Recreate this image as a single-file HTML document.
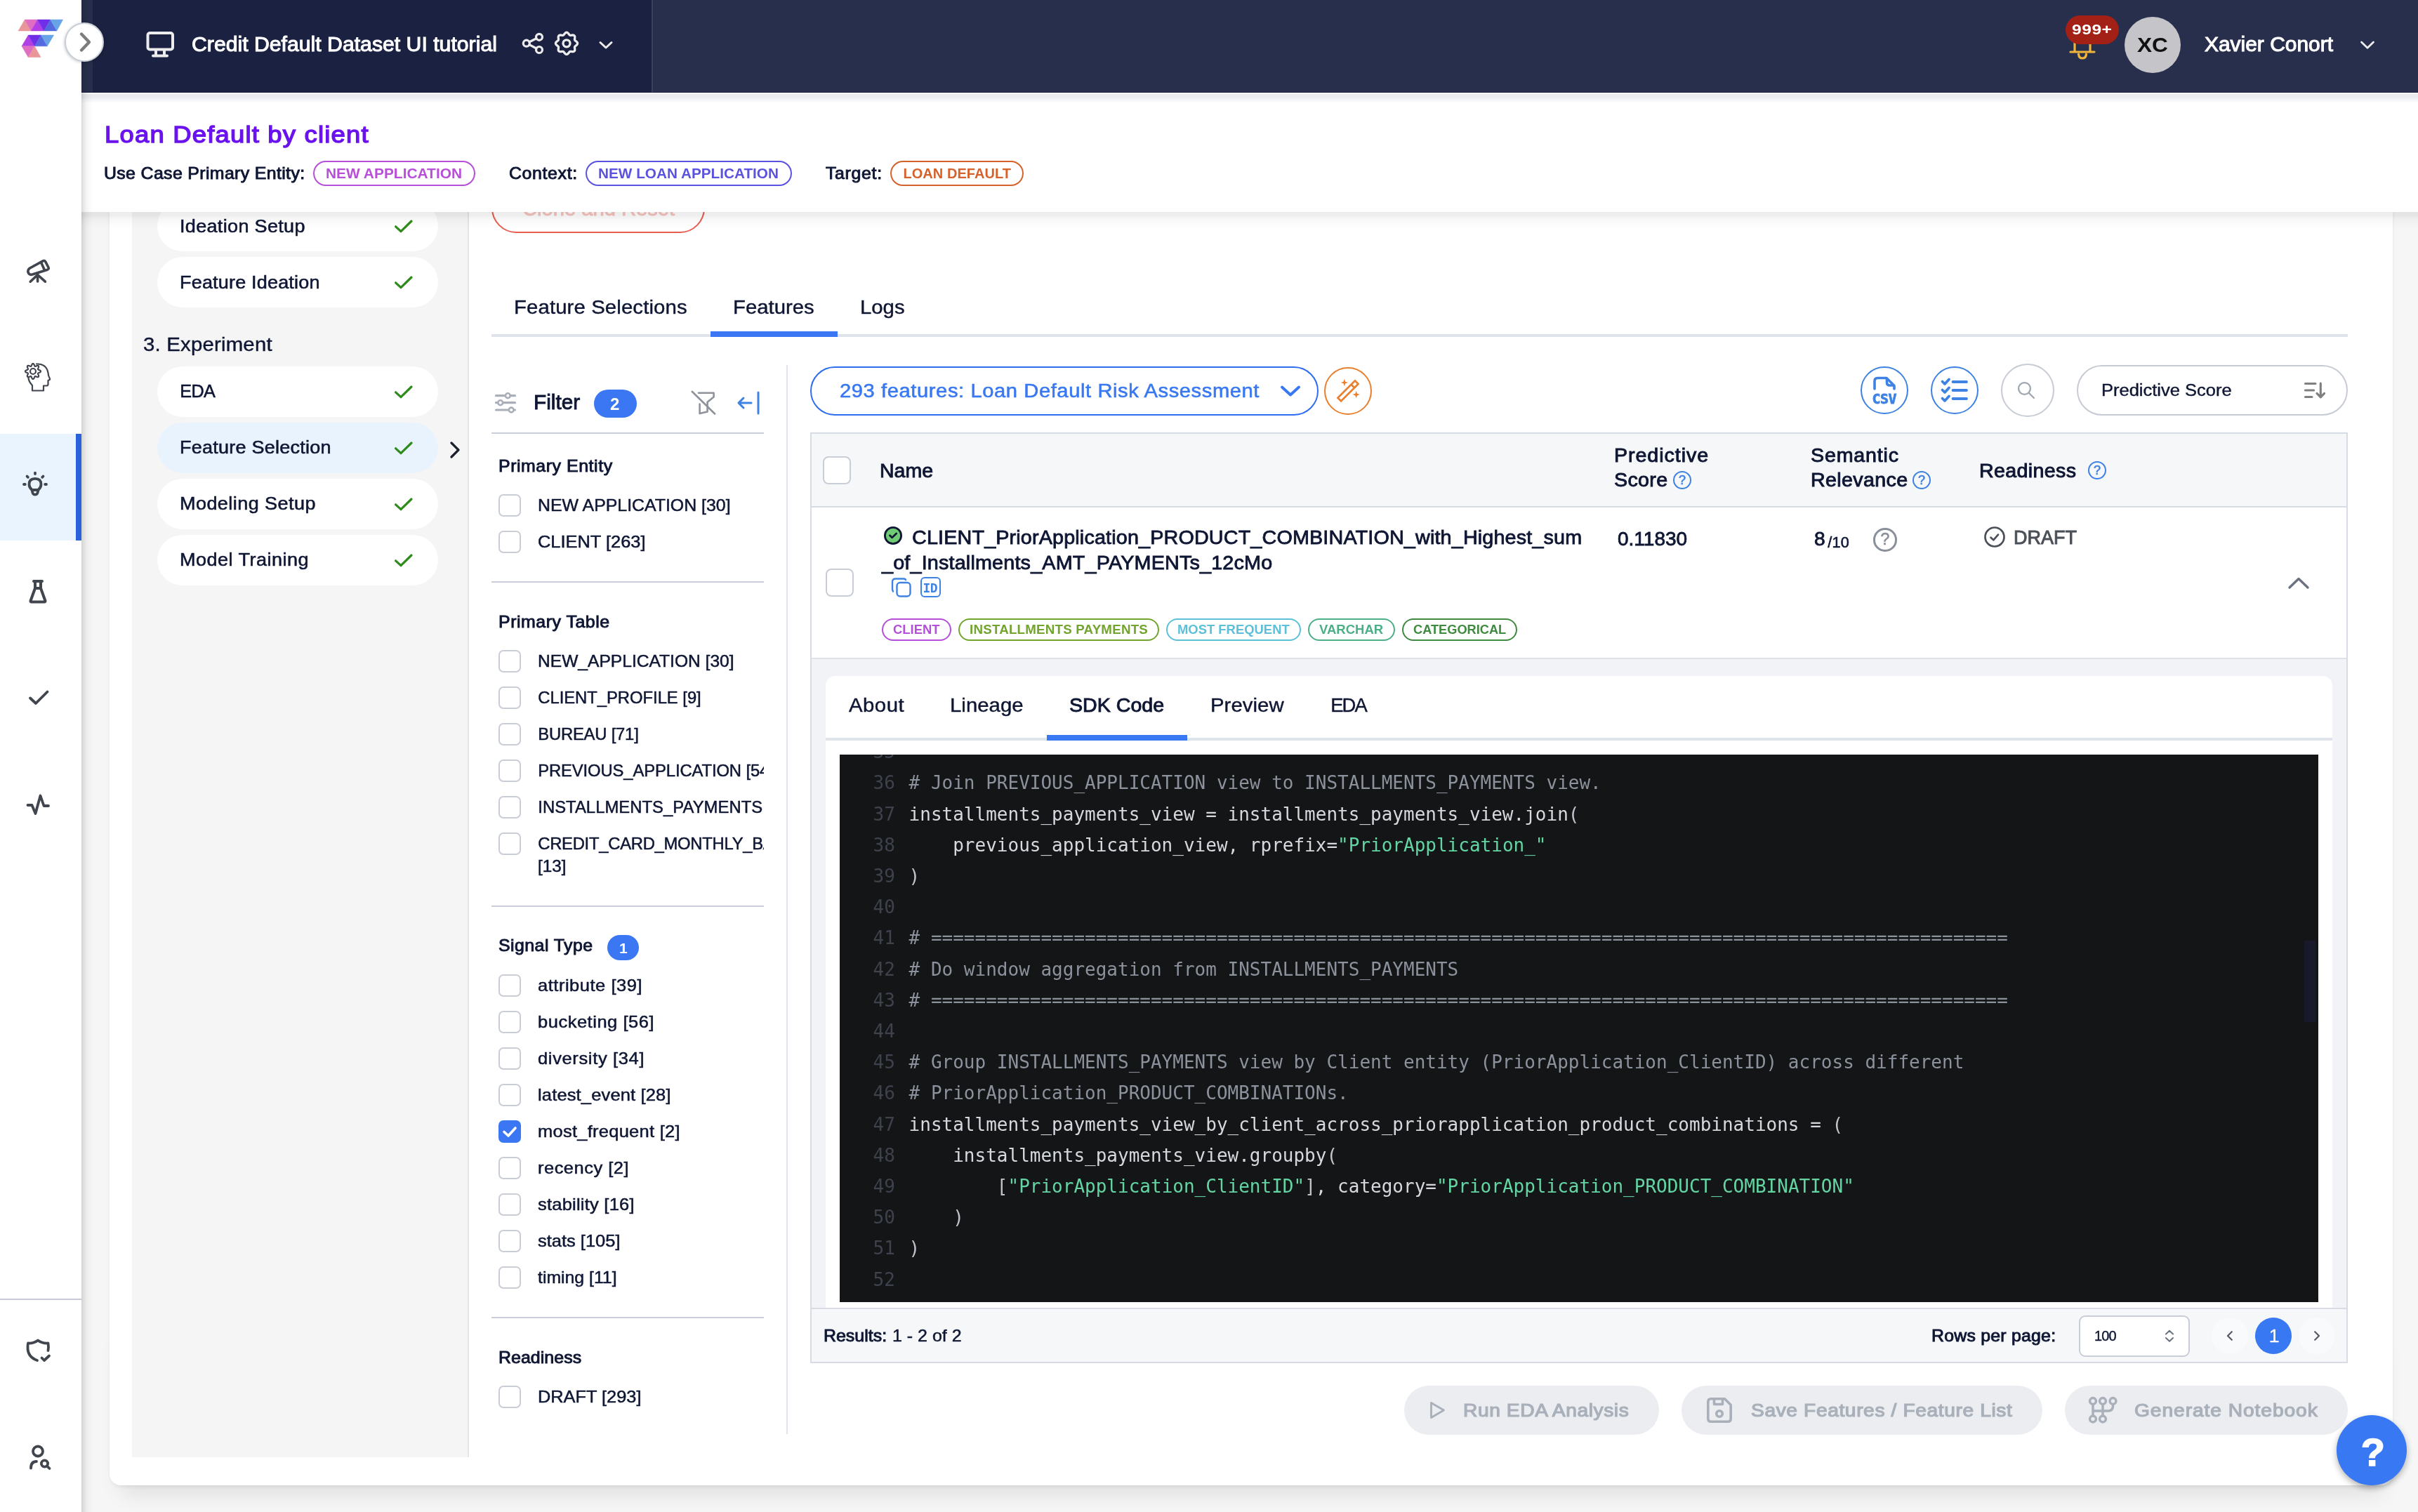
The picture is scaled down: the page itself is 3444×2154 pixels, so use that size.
<!DOCTYPE html>
<html><head><meta charset="utf-8"><title>Feature Selection</title><style>
*{box-sizing:border-box;margin:0;padding:0}
html,body{width:3444px;height:2154px;overflow:hidden;background:#f6f6f6}
body{font-family:"Liberation Sans",sans-serif;position:relative}
.a{position:absolute}
.t{position:absolute;white-space:nowrap;line-height:1}
.code{font-family:"DejaVu Sans Mono","Liberation Mono",monospace;font-size:26px;white-space:pre;position:absolute;line-height:1}
</style></head><body><div id="root" style="position:absolute;left:0;top:0;width:3444px;height:2154px;overflow:hidden;will-change:transform">
<div class="a" style="left:170px;top:1900px;width:3224px;height:216px;border-radius:0 0 16px 16px;box-shadow:0 14px 30px rgba(0,0,0,.09)"></div>
<div class="a" style="left:156px;top:250px;width:3252px;height:1866px;background:#fff;border-radius:0 0 16px 16px;box-shadow:0 3px 6px -1px rgba(0,0,0,.07),0 0 4px rgba(0,0,0,.04)"></div>
<div class="a" style="left:188px;top:280px;width:480px;height:1796px;background:#f5f5f5;border-right:2px solid #e3e5ea"></div>
<div class="a" style="left:224px;top:286px;width:400px;height:72px;background:#fff;border-radius:36px"></div><span class="t" style="font-size: 25.24px; color: rgb(14, 22, 51); -webkit-text-stroke: 0.55px rgb(14, 22, 51); top: 309.73px; left: 256.27px; letter-spacing: 0.308px; transform: scaleX(1.07); transform-origin: 0px 0px;">Ideation Setup</span><svg class="a" style="left:560px;top:308px;" width="30" height="28" viewBox="0 0 30 28" fill="none"><path d="M3.6 14.8 L11 21.7 L26 7" stroke="#2f8a1c" stroke-width="3.2" stroke-linecap="round" stroke-linejoin="round"></path></svg>
<div class="a" style="left:224px;top:366px;width:400px;height:72px;background:#fff;border-radius:36px"></div><span class="t" style="font-size: 25.24px; color: rgb(14, 22, 51); -webkit-text-stroke: 0.55px rgb(14, 22, 51); top: 389.73px; left: 256.27px; letter-spacing: 0.175px; transform: scaleX(1.07); transform-origin: 0px 0px;">Feature Ideation</span><svg class="a" style="left:560px;top:388px;" width="30" height="28" viewBox="0 0 30 28" fill="none"><path d="M3.6 14.8 L11 21.7 L26 7" stroke="#2f8a1c" stroke-width="3.2" stroke-linecap="round" stroke-linejoin="round"></path></svg>
<span class="t" style="font-size: 27.44px; color: rgb(14, 22, 51); -webkit-text-stroke: 0.4px rgb(14, 22, 51); top: 476.8px; left: 204.2px; letter-spacing: 0.192px; transform: scaleX(1.07); transform-origin: 0px 0px;">3. Experiment</span>
<div class="a" style="left:224px;top:521.5px;width:400px;height:72px;background:#fff;border-radius:36px"></div><span class="t" style="font-size: 25.24px; color: rgb(14, 22, 51); -webkit-text-stroke: 0.55px rgb(14, 22, 51); top: 545.23px; left: 256.27px; letter-spacing: -0.72px;">EDA</span><svg class="a" style="left:560px;top:543.5px;" width="30" height="28" viewBox="0 0 30 28" fill="none"><path d="M3.6 14.8 L11 21.7 L26 7" stroke="#2f8a1c" stroke-width="3.2" stroke-linecap="round" stroke-linejoin="round"></path></svg>
<div class="a" style="left:224px;top:601.5px;width:400px;height:72px;background:#e9f3fd;border-radius:36px"></div><span class="t" style="font-size: 25.24px; color: rgb(14, 22, 51); -webkit-text-stroke: 0.55px rgb(14, 22, 51); top: 625.23px; left: 256.27px; letter-spacing: 0.222px; transform: scaleX(1.07); transform-origin: 0px 0px;">Feature Selection</span><svg class="a" style="left:560px;top:623.5px;" width="30" height="28" viewBox="0 0 30 28" fill="none"><path d="M3.6 14.8 L11 21.7 L26 7" stroke="#2f8a1c" stroke-width="3.2" stroke-linecap="round" stroke-linejoin="round"></path></svg>
<div class="a" style="left:224px;top:681.5px;width:400px;height:72px;background:#fff;border-radius:36px"></div><span class="t" style="font-size: 25.24px; color: rgb(14, 22, 51); -webkit-text-stroke: 0.55px rgb(14, 22, 51); top: 705.23px; left: 256.27px; letter-spacing: 0.418px; transform: scaleX(1.07); transform-origin: 0px 0px;">Modeling Setup</span><svg class="a" style="left:560px;top:703.5px;" width="30" height="28" viewBox="0 0 30 28" fill="none"><path d="M3.6 14.8 L11 21.7 L26 7" stroke="#2f8a1c" stroke-width="3.2" stroke-linecap="round" stroke-linejoin="round"></path></svg>
<div class="a" style="left:224px;top:761.5px;width:400px;height:72px;background:#fff;border-radius:36px"></div><span class="t" style="font-size: 25.24px; color: rgb(14, 22, 51); -webkit-text-stroke: 0.55px rgb(14, 22, 51); top: 785.23px; left: 256.27px; letter-spacing: 0.456px; transform: scaleX(1.07); transform-origin: 0px 0px;">Model Training</span><svg class="a" style="left:560px;top:783.5px;" width="30" height="28" viewBox="0 0 30 28" fill="none"><path d="M3.6 14.8 L11 21.7 L26 7" stroke="#2f8a1c" stroke-width="3.2" stroke-linecap="round" stroke-linejoin="round"></path></svg>
<svg class="a" style="left:638px;top:628px;" width="20" height="26" viewBox="0 0 20 26" fill="none"><path d="M5 3 L15 13 L5 23" stroke="#1a1f2e" stroke-width="3.2" stroke-linecap="round" stroke-linejoin="round"></path></svg>
<span class="t" style="font-size: 27.44px; color: rgb(14, 22, 51); -webkit-text-stroke: 0.4px rgb(14, 22, 51); top: 423.8px; left: 732.2px; letter-spacing: 0.099px; transform: scaleX(1.07); transform-origin: 0px 0px;">Feature Selections</span>
<span class="t" style="font-size: 27.44px; color: rgb(14, 22, 51); -webkit-text-stroke: 0.4px rgb(14, 22, 51); top: 423.8px; left: 1044.2px; letter-spacing: 0px; transform: scaleX(1.068); transform-origin: 0px 0px;">Features</span>
<span class="t" style="font-size: 27.44px; color: rgb(14, 22, 51); -webkit-text-stroke: 0.4px rgb(14, 22, 51); top: 423.8px; left: 1225.2px; letter-spacing: 0px; transform: scaleX(1.069); transform-origin: 0px 0px;">Logs</span>
<div class="a" style="left:700px;top:476px;width:2644px;height:4px;background:#dfe3ea"></div>
<div class="a" style="left:1012px;top:472px;width:181px;height:8px;background:#3b77f3"></div>
<div class="a" style="left:700px;top:261px;width:303.5px;height:70.5px;border:2px solid #e85d50;border-radius:36px;background:#fff"></div>
<span class="t" style="font-size: 28.75px; color: rgb(246, 196, 191); -webkit-text-stroke: 0.9px rgb(246, 196, 191); top: 283.05px; left: 744.45px; letter-spacing: 0px; transform: scaleX(1.014); transform-origin: 0px 0px;">Clone and Reset</span>
<svg class="a" style="left:700px;top:555px;" width="40" height="40" viewBox="0 0 40 40" fill="none"><g stroke="#a9aeb8" stroke-width="3.2" stroke-linecap="round" fill="none">
<path d="M6.5 8.7H18.5M28 8.7H33.5M6.5 18.7H8M17.5 18.7H33.5M6.5 29H23.5M33 29H33.5"></path>
<circle cx="23.3" cy="8.7" r="3.4" stroke-width="2.6"></circle><circle cx="12.7" cy="18.7" r="3.4" stroke-width="2.6"></circle><circle cx="28.2" cy="29" r="3.4" stroke-width="2.6"></circle></g></svg>
<span class="t" style="font-size: 28.75px; color: rgb(14, 22, 51); -webkit-text-stroke: 0.9px rgb(14, 22, 51); top: 558.55px; left: 760.45px; letter-spacing: 0px; transform: scaleX(1.035); transform-origin: 0px 0px;">Filter</span>
<div class="a" style="left:846px;top:555px;width:61px;height:40px;background:#3b77f3;border-radius:20px"></div>
<span class="t" style="font-size: 24px; color: rgb(255, 255, 255); font-weight: 700; top: 564px; left: 869px;">2</span>
<svg class="a" style="left:980px;top:550px;" width="44" height="44" viewBox="0 0 44 44" fill="none"><g stroke="#8e939b" stroke-width="2.6" stroke-linecap="round" stroke-linejoin="round" fill="none">
<path d="M15 9.8H36.6V15.5L27.6 22.8V36.4L16.6 39.1V25.5"></path><path d="M5.7 7.8L38.1 39.5"></path></g></svg>
<svg class="a" style="left:1048px;top:556px;" width="36" height="36" viewBox="0 0 36 36" fill="none"><g stroke="#3e82e3" stroke-width="3" stroke-linecap="round" stroke-linejoin="round" fill="none">
<path d="M22 18H4M11 11L4 18L11 25"></path><path d="M32 3V33"></path></g></svg>
<div class="a" style="left:700px;top:616px;width:388px;height:2px;background:#c9ced8"></div>
<div class="a" style="left:1120px;top:520px;width:2px;height:1523px;background:#e0e3ea"></div>
<span class="t" style="font-size: 23.25px; color: rgb(14, 22, 51); -webkit-text-stroke: 0.9px rgb(14, 22, 51); top: 652.55px; left: 710.45px; letter-spacing: 0.522px; transform: scaleX(1.07); transform-origin: 0px 0px;">Primary Entity</span>
<div class="a" style="left:710px;top:704px;width:32px;height:32px;background:#fff;border:2px solid #c9ced6;border-radius:7px"></div><span class="t" style="font-size: 23.81px; color: rgb(14, 22, 51); -webkit-text-stroke: 0.5px rgb(14, 22, 51); top: 707.75px; left: 766.25px; letter-spacing: 0px; transform: scaleX(1.045); transform-origin: 0px 0px;">NEW APPLICATION [30]</span>
<div class="a" style="left:710px;top:756px;width:32px;height:32px;background:#fff;border:2px solid #c9ced6;border-radius:7px"></div><span class="t" style="font-size: 23.81px; color: rgb(14, 22, 51); -webkit-text-stroke: 0.5px rgb(14, 22, 51); top: 759.75px; left: 766.25px; letter-spacing: 0px; transform: scaleX(1.068); transform-origin: 0px 0px;">CLIENT [263]</span>
<div class="a" style="left:700px;top:828px;width:388px;height:2px;background:#c9ced8"></div>
<span class="t" style="font-size: 23.25px; color: rgb(14, 22, 51); -webkit-text-stroke: 0.9px rgb(14, 22, 51); top: 874.55px; left: 710.45px; letter-spacing: 0.504px; transform: scaleX(1.07); transform-origin: 0px 0px;">Primary Table</span>
<div class="a" style="left:700px;top:900px;width:388px;height:370px;overflow:hidden">
</div>
<div class="a" style="left:710px;top:926px;width:32px;height:32px;background:#fff;border:2px solid #c9ced6;border-radius:7px"></div><span class="t" style="font-size: 23.81px; color: rgb(14, 22, 51); -webkit-text-stroke: 0.5px rgb(14, 22, 51); top: 929.75px; left: 766.25px; letter-spacing: 0px; transform: scaleX(1.033); transform-origin: 0px 0px;">NEW_APPLICATION [30]</span>
<div class="a" style="left:710px;top:978px;width:32px;height:32px;background:#fff;border:2px solid #c9ced6;border-radius:7px"></div><span class="t" style="font-size: 23.81px; color: rgb(14, 22, 51); -webkit-text-stroke: 0.5px rgb(14, 22, 51); top: 981.75px; left: 766.25px; letter-spacing: -0.016px;">CLIENT_PROFILE [9]</span>
<div class="a" style="left:710px;top:1030px;width:32px;height:32px;background:#fff;border:2px solid #c9ced6;border-radius:7px"></div><span class="t" style="font-size: 23.81px; color: rgb(14, 22, 51); -webkit-text-stroke: 0.5px rgb(14, 22, 51); top: 1033.75px; left: 766.25px; letter-spacing: -0.198px;">BUREAU [71]</span>
<div class="a" style="left:710px;top:1082px;width:32px;height:32px;background:#fff;border:2px solid #c9ced6;border-radius:7px"></div><div class="a" style="left:710px;top:1134px;width:32px;height:32px;background:#fff;border:2px solid #c9ced6;border-radius:7px"></div><div class="a" style="left:710px;top:1186px;width:32px;height:32px;background:#fff;border:2px solid #c9ced6;border-radius:7px"></div>
<div class="a" style="left:760px;top:1070px;width:328px;height:200px;overflow:hidden">
<span class="t" style="font-size: 23.81px; color: rgb(14, 22, 51); -webkit-text-stroke: 0.5px rgb(14, 22, 51); top: 15.75px; left: 6.25px; letter-spacing: -0.109px;">PREVIOUS_APPLICATION [54]</span>
<span class="t" style="font-size: 23.81px; color: rgb(14, 22, 51); -webkit-text-stroke: 0.5px rgb(14, 22, 51); top: 67.75px; left: 6.25px; letter-spacing: 0.061px;">INSTALLMENTS_PAYMENTS [40]</span>
<span class="t" style="font-size: 23.81px; color: rgb(14, 22, 51); -webkit-text-stroke: 0.5px rgb(14, 22, 51); top: 119.75px; left: 6.25px; letter-spacing: -0.265px;">CREDIT_CARD_MONTHLY_BALANCE</span>
<span class="t" style="font-size: 23.81px; color: rgb(14, 22, 51); -webkit-text-stroke: 0.5px rgb(14, 22, 51); top: 151.75px; left: 6.25px; letter-spacing: 0px; transform: scaleX(1.02); transform-origin: 0px 0px;">[13]</span>
</div>
<div class="a" style="left:700px;top:1290px;width:388px;height:2px;background:#c9ced8"></div>
<span class="t" style="font-size: 23.25px; color: rgb(14, 22, 51); -webkit-text-stroke: 0.9px rgb(14, 22, 51); top: 1335.55px; left: 710.45px; letter-spacing: 0.425px; transform: scaleX(1.07); transform-origin: 0px 0px;">Signal Type</span>
<div class="a" style="left:865px;top:1332px;width:45px;height:36px;background:#3b77f3;border-radius:18px"></div>
<span class="t" style="font-size: 21px; color: rgb(255, 255, 255); font-weight: 700; top: 1340px; left: 882px;">1</span>
<div class="a" style="left:710px;top:1388px;width:32px;height:32px;background:#fff;border:2px solid #c9ced6;border-radius:7px"></div><span class="t" style="font-size: 23.81px; color: rgb(14, 22, 51); -webkit-text-stroke: 0.5px rgb(14, 22, 51); top: 1391.75px; left: 766.25px; letter-spacing: 0.499px; transform: scaleX(1.07); transform-origin: 0px 0px;">attribute [39]</span>
<div class="a" style="left:710px;top:1440px;width:32px;height:32px;background:#fff;border:2px solid #c9ced6;border-radius:7px"></div><span class="t" style="font-size: 23.81px; color: rgb(14, 22, 51); -webkit-text-stroke: 0.5px rgb(14, 22, 51); top: 1443.75px; left: 766.25px; letter-spacing: 0.499px; transform: scaleX(1.07); transform-origin: 0px 0px;">bucketing [56]</span>
<div class="a" style="left:710px;top:1492px;width:32px;height:32px;background:#fff;border:2px solid #c9ced6;border-radius:7px"></div><span class="t" style="font-size: 23.81px; color: rgb(14, 22, 51); -webkit-text-stroke: 0.5px rgb(14, 22, 51); top: 1495.75px; left: 766.25px; letter-spacing: 0.615px; transform: scaleX(1.07); transform-origin: 0px 0px;">diversity [34]</span>
<div class="a" style="left:710px;top:1544px;width:32px;height:32px;background:#fff;border:2px solid #c9ced6;border-radius:7px"></div><span class="t" style="font-size: 23.81px; color: rgb(14, 22, 51); -webkit-text-stroke: 0.5px rgb(14, 22, 51); top: 1547.75px; left: 766.25px; letter-spacing: 0.154px; transform: scaleX(1.07); transform-origin: 0px 0px;">latest_event [28]</span>
<div class="a" style="left:710px;top:1596px;width:32px;height:32px;background:#3b77f3;border-radius:7px"></div><svg class="a" style="left:710px;top:1596px;" width="32" height="32" viewBox="0 0 32 32" fill="none"><path d="M8 16.5L14 22L24 11" stroke="#fff" stroke-width="3.6" stroke-linecap="round" stroke-linejoin="round"></path></svg><span class="t" style="font-size: 23.81px; color: rgb(14, 22, 51); -webkit-text-stroke: 0.5px rgb(14, 22, 51); top: 1599.75px; left: 766.25px; letter-spacing: 0.253px; transform: scaleX(1.07); transform-origin: 0px 0px;">most_frequent [2]</span>
<div class="a" style="left:710px;top:1648px;width:32px;height:32px;background:#fff;border:2px solid #c9ced6;border-radius:7px"></div><span class="t" style="font-size: 23.81px; color: rgb(14, 22, 51); -webkit-text-stroke: 0.5px rgb(14, 22, 51); top: 1651.75px; left: 766.25px; letter-spacing: 0.462px; transform: scaleX(1.07); transform-origin: 0px 0px;">recency [2]</span>
<div class="a" style="left:710px;top:1700px;width:32px;height:32px;background:#fff;border:2px solid #c9ced6;border-radius:7px"></div><span class="t" style="font-size: 23.81px; color: rgb(14, 22, 51); -webkit-text-stroke: 0.5px rgb(14, 22, 51); top: 1703.75px; left: 766.25px; letter-spacing: 0.219px; transform: scaleX(1.07); transform-origin: 0px 0px;">stability [16]</span>
<div class="a" style="left:710px;top:1752px;width:32px;height:32px;background:#fff;border:2px solid #c9ced6;border-radius:7px"></div><span class="t" style="font-size: 23.81px; color: rgb(14, 22, 51); -webkit-text-stroke: 0.5px rgb(14, 22, 51); top: 1755.75px; left: 766.25px; letter-spacing: 0.002px; transform: scaleX(1.07); transform-origin: 0px 0px;">stats [105]</span>
<div class="a" style="left:710px;top:1804px;width:32px;height:32px;background:#fff;border:2px solid #c9ced6;border-radius:7px"></div><span class="t" style="font-size: 23.81px; color: rgb(14, 22, 51); -webkit-text-stroke: 0.5px rgb(14, 22, 51); top: 1807.75px; left: 766.25px; letter-spacing: 0px; transform: scaleX(1.042); transform-origin: 0px 0px;">timing [11]</span>
<div class="a" style="left:700px;top:1876px;width:388px;height:2px;background:#c9ced8"></div>
<span class="t" style="font-size: 23.25px; color: rgb(14, 22, 51); -webkit-text-stroke: 0.9px rgb(14, 22, 51); top: 1922.55px; left: 710.45px; letter-spacing: 0.064px; transform: scaleX(1.07); transform-origin: 0px 0px;">Readiness</span>
<div class="a" style="left:710px;top:1974px;width:32px;height:32px;background:#fff;border:2px solid #c9ced6;border-radius:7px"></div><span class="t" style="font-size: 23.81px; color: rgb(14, 22, 51); -webkit-text-stroke: 0.5px rgb(14, 22, 51); top: 1977.75px; left: 766.25px; letter-spacing: 0px; transform: scaleX(1.065); transform-origin: 0px 0px;">DRAFT [293]</span>
<div class="a" style="left:1154px;top:522px;width:724px;height:70px;border:2px solid #2f6df0;border-radius:35px;background:#fff"></div>
<span class="t" style="font-size: 27.24px; color: rgb(56, 120, 242); -webkit-text-stroke: 0.55px rgb(56, 120, 242); top: 542.73px; left: 1196.28px; letter-spacing: 0.548px; transform: scaleX(1.07); transform-origin: 0px 0px;">293 features: Loan Default Risk Assessment</span>
<svg class="a" style="left:1818px;top:543px;" width="40" height="28" viewBox="0 0 40 28" fill="none"><path d="M8 8.6 L20 19.4 L32 8.6" stroke="#3878f2" stroke-width="4" stroke-linecap="round" stroke-linejoin="round"></path></svg>
<div class="a" style="left:1886px;top:523px;width:68px;height:68px;border:2px solid #e8802f;border-radius:50%;background:#fff"></div>
<svg class="a" style="left:1896px;top:533px;" width="48" height="48" viewBox="0 0 48 48" fill="none"><g stroke="#e8802f" stroke-width="2.7" stroke-linejoin="miter" fill="none" transform="rotate(-45 24 23.9)">
<rect x="6.7" y="20.65" width="34.6" height="6.5"></rect><path d="M33.6 20.65 V27.15"></path></g>
<path d="M18.90 6.80 L20.24 10.66 L24.10 12.00 L20.24 13.34 L18.90 17.20 L17.56 13.34 L13.70 12.00 L17.56 10.66Z" fill="#e8802f"></path>
<path d="M35.70 23.90 L37.04 27.76 L40.90 29.10 L37.04 30.44 L35.70 34.30 L34.36 30.44 L30.50 29.10 L34.36 27.76Z" fill="#e8802f"></path></svg>
<div class="a" style="left:2650px;top:522px;width:68px;height:68px;border:2px solid #3e82e3;border-radius:50%;background:#fff"></div>
<svg class="a" style="left:2660px;top:532px;" width="48" height="48" viewBox="0 0 48 48" fill="none"><g stroke="#3e82e3" stroke-width="3.6" stroke-linecap="round" stroke-linejoin="round" fill="none">
<path d="M10 22 V11 Q10 6.5 14.5 6.5 H27 L38 17.5 V22"></path><path d="M27.5 7.5 V13 Q27.5 17 31.5 17 H37"></path></g></svg>
<span class="t" style="font-size: 19.89px; color: rgb(62, 130, 227); font-weight: 700; -webkit-text-stroke: 0.8px rgb(62, 130, 227); font-family: &quot;DejaVu Sans Mono&quot;, &quot;Liberation Mono&quot;, monospace; top: 559.4px; left: 2666.4px; letter-spacing: -0.353px;">CSV</span>
<div class="a" style="left:2750px;top:522px;width:68px;height:68px;border:2px solid #3e82e3;border-radius:50%;background:#fff"></div>
<svg class="a" style="left:2760px;top:532px;" width="48" height="48" viewBox="0 0 48 48" fill="none"><g stroke="#3e82e3" stroke-width="3.8" stroke-linecap="round" stroke-linejoin="round" fill="none">
<path d="M21.5 12 H41 M21.5 24 H41 M21.5 36 H41"></path>
<path d="M6.5 11.5 L10 15 L16 8.5 M6.5 23.5 L10 27 L16 20.5 M6.5 35.5 L10 39 L16 32.5"></path></g></svg>
<div class="a" style="left:2850px;top:518px;width:76px;height:76px;border:2px solid #c6cbd4;border-radius:50%;background:#fff"></div>
<svg class="a" style="left:2866px;top:534px;" width="44" height="44" viewBox="0 0 44 44" fill="none"><g stroke="#a0a6b0" stroke-width="2.3" stroke-linecap="round" fill="none"><circle cx="17.5" cy="19.5" r="8.4"></circle><path d="M24 26 L31 33"></path></g></svg>
<div class="a" style="left:2958px;top:520px;width:386px;height:72px;border:2px solid #c6cbd4;border-radius:36px;background:#fff"></div>
<span class="t" style="font-size: 23.94px; color: rgb(14, 22, 51); -webkit-text-stroke: 0.4px rgb(14, 22, 51); top: 543.8px; left: 2992.7px; letter-spacing: 0px; transform: scaleX(1.065); transform-origin: 0px 0px;">Predictive Score</span>
<svg class="a" style="left:3280px;top:538px;" width="34" height="34" viewBox="0 0 34 34" fill="none"><g stroke="#7f7f82" stroke-width="3.1" stroke-linecap="round" stroke-linejoin="round" fill="none"><path d="M3.5 8.5 H18 M3.5 18 H15.6 M3.5 27.5 H13"></path><path d="M25.3 8 V27.5 M20 22.3 L25.3 27.8 L30.6 22.3"></path></g></svg>
<div class="a" style="left:1154px;top:616px;width:2190px;height:1326px;border:2px solid #d7dbe3;background:#f2f3f6"></div>
<div class="a" style="left:1156px;top:618px;width:2186px;height:104px;background:#f6f7f9"></div>
<div class="a" style="left:1156px;top:721px;width:2186px;height:2px;background:#d7dbe3"></div>
<div class="a" style="left:1172px;top:650px;width:40px;height:40px;background:#fff;border:2px solid #c9ced6;border-radius:8px"></div>
<span class="t" style="font-size: 27.75px; color: rgb(14, 22, 51); -webkit-text-stroke: 0.9px rgb(14, 22, 51); top: 656.55px; left: 1252.95px; letter-spacing: 0px; transform: scaleX(1.028); transform-origin: 0px 0px;">Name</span>
<span class="t" style="font-size: 26.75px; color: rgb(14, 22, 51); -webkit-text-stroke: 0.9px rgb(14, 22, 51); top: 635.55px; left: 2299.45px; letter-spacing: 0.875px; transform: scaleX(1.07); transform-origin: 0px 0px;">Predictive</span>
<span class="t" style="font-size: 26.75px; color: rgb(14, 22, 51); -webkit-text-stroke: 0.9px rgb(14, 22, 51); top: 670.55px; left: 2299.45px; letter-spacing: 0.308px; transform: scaleX(1.07); transform-origin: 0px 0px;">Score</span>
<span class="t" style="font-size: 26.75px; color: rgb(14, 22, 51); -webkit-text-stroke: 0.9px rgb(14, 22, 51); top: 635.55px; left: 2579.45px; letter-spacing: 0.771px; transform: scaleX(1.07); transform-origin: 0px 0px;">Semantic</span>
<span class="t" style="font-size: 26.75px; color: rgb(14, 22, 51); -webkit-text-stroke: 0.9px rgb(14, 22, 51); top: 670.55px; left: 2579.45px; letter-spacing: 0.332px; transform: scaleX(1.07); transform-origin: 0px 0px;">Relevance</span>
<span class="t" style="font-size: 26.75px; color: rgb(14, 22, 51); -webkit-text-stroke: 0.9px rgb(14, 22, 51); top: 657.55px; left: 2819.45px; letter-spacing: 0.332px; transform: scaleX(1.07); transform-origin: 0px 0px;">Readiness</span>
<div class="a" style="left:2383.0px;top:671.0px;width:26px;height:26px;border:2px solid #3e82e3;border-radius:50%"></div><span class="t" style="left:2383.0px;top:671.0px;width:26px;height:26px;line-height:26px;text-align:center;font-size:18px;color:#3e82e3;-webkit-text-stroke:0.6px #3e82e3">?</span>
<div class="a" style="left:2724.0px;top:671.0px;width:26px;height:26px;border:2px solid #3e82e3;border-radius:50%"></div><span class="t" style="left:2724.0px;top:671.0px;width:26px;height:26px;line-height:26px;text-align:center;font-size:18px;color:#3e82e3;-webkit-text-stroke:0.6px #3e82e3">?</span>
<div class="a" style="left:2974.0px;top:657.0px;width:26px;height:26px;border:2px solid #3e82e3;border-radius:50%"></div><span class="t" style="left:2974.0px;top:657.0px;width:26px;height:26px;line-height:26px;text-align:center;font-size:18px;color:#3e82e3;-webkit-text-stroke:0.6px #3e82e3">?</span>
<div class="a" style="left:1156px;top:723px;width:2186px;height:215px;background:#fff"></div>
<div class="a" style="left:1156px;top:937px;width:2186px;height:2px;background:#dfe2e8"></div>
<div class="a" style="left:1176px;top:810px;width:40px;height:40px;background:#fff;border:2px solid #c9ced6;border-radius:8px"></div>
<svg class="a" style="left:1258px;top:749px;" width="28" height="28" viewBox="0 0 28 28" fill="none"><circle cx="14" cy="14" r="11.6" fill="#6fcb74" stroke="#0e1633" stroke-width="2.8"></circle><path d="M9.4 13.8 L12.7 16.9 L18.7 11" stroke="#0e1633" stroke-width="2.7" stroke-linecap="round" stroke-linejoin="round"></path></svg>
<span class="t" style="font-size: 26.89px; color: rgb(14, 22, 51); -webkit-text-stroke: 0.8px rgb(14, 22, 51); top: 752.6px; left: 1299.4px; letter-spacing: 0.137px; transform: scaleX(1.07); transform-origin: 0px 0px;">CLIENT_PriorApplication_PRODUCT_COMBINATION_with_Highest_sum</span>
<span class="t" style="font-size: 26.89px; color: rgb(14, 22, 51); -webkit-text-stroke: 0.8px rgb(14, 22, 51); top: 788.6px; left: 1256.4px; letter-spacing: 0.162px; transform: scaleX(1.07); transform-origin: 0px 0px;">_of_Installments_AMT_PAYMENTs_12cMo</span>
<svg class="a" style="left:1268px;top:821px;" width="32" height="32" viewBox="0 0 32 32" fill="none"><g stroke="#3e82e3" stroke-width="2.4" stroke-linecap="round" stroke-linejoin="round" fill="none"><rect x="9.5" y="9" width="19" height="19.5" rx="4.5"></rect><path d="M4 21.5 Q3 20 3 18 V8 Q3 3.5 7.5 3.5 H19 Q21.5 3.5 22 5"></path></g></svg>
<div class="a" style="left:1311px;top:822px;width:29px;height:29px;border:2.6px solid #3e82e3;border-radius:6px"></div>
<span class="t" style="font-size: 18px; color: rgb(62, 130, 227); font-weight: 700; font-family: &quot;DejaVu Sans Mono&quot;, &quot;Liberation Mono&quot;, monospace; top: 828.5px; left: 1314.5px; letter-spacing: -0.687px;">ID</span>
<div class="a" style="left:1256px;top:881px;width:99px;height:32px;border:2px solid #b54fd9;border-radius:16px;background:#fff"></div><span class="t" style="font-size: 17.5px; color: rgb(181, 79, 217); font-weight: 700; top: 889px; left: 1272px; letter-spacing: 0px; transform: scaleX(1.054); transform-origin: 0px 0px;">CLIENT</span>
<div class="a" style="left:1365px;top:881px;width:285.5px;height:32px;border:2px solid #72a52d;border-radius:16px;background:#fff"></div><span class="t" style="font-size: 17.5px; color: rgb(114, 165, 45); font-weight: 700; top: 889px; left: 1380.7px; letter-spacing: 0.208px; transform: scaleX(1.07); transform-origin: 0px 0px;">INSTALLMENTS PAYMENTS</span>
<div class="a" style="left:1661px;top:881px;width:191.5999999999999px;height:32px;border:2px solid #5cc0d8;border-radius:16px;background:#fff"></div><span class="t" style="font-size: 17.5px; color: rgb(92, 192, 216); font-weight: 700; top: 889px; left: 1676.8px; letter-spacing: 0px; transform: scaleX(1.053); transform-origin: 0px 0px;">MOST FREQUENT</span>
<div class="a" style="left:1863.3px;top:881px;width:123.29999999999995px;height:32px;border:2px solid #4cb087;border-radius:16px;background:#fff"></div><span class="t" style="font-size: 17.5px; color: rgb(76, 176, 135); font-weight: 700; top: 889px; left: 1879.4px; letter-spacing: 0px; transform: scaleX(1.057); transform-origin: 0px 0px;">VARCHAR</span>
<div class="a" style="left:1997.3px;top:881px;width:163.50000000000023px;height:32px;border:2px solid #3f8a3f;border-radius:16px;background:#fff"></div><span class="t" style="font-size: 17.5px; color: rgb(63, 138, 63); font-weight: 700; top: 889px; left: 2012.9px; letter-spacing: 0px; transform: scaleX(1.041); transform-origin: 0px 0px;">CATEGORICAL</span>
<span class="t" style="font-size: 26.89px; color: rgb(14, 22, 51); -webkit-text-stroke: 0.8px rgb(14, 22, 51); top: 755.1px; left: 2303.9px; letter-spacing: 0px; transform: scaleX(1.042); transform-origin: 0px 0px;">0.11830</span>
<span class="t" style="font-size: 26.89px; color: rgb(14, 22, 51); -webkit-text-stroke: 0.8px rgb(14, 22, 51); top: 755.1px; left: 2583.9px; letter-spacing: 0px; transform: scaleX(1.05); transform-origin: 0px 0px;">8</span>
<span class="t" style="font-size: 21.67px; color: rgb(14, 22, 51); -webkit-text-stroke: 0.6px rgb(14, 22, 51); top: 762px; left: 2603.3px; letter-spacing: 0.145px;">/10</span>
<div class="a" style="left:2668.25px;top:752.25px;width:33.5px;height:33.5px;border:3px solid #8a9099;border-radius:50%"></div><span class="t" style="left:2668.25px;top:752.25px;width:33.5px;height:33.5px;line-height:33.5px;text-align:center;font-size:23px;color:#8a9099;-webkit-text-stroke:0.6px #8a9099">?</span>
<svg class="a" style="left:2825px;top:749px;" width="32" height="32" viewBox="0 0 32 32" fill="none"><g stroke="#4b5058" stroke-width="2.7" stroke-linecap="round" stroke-linejoin="round" fill="none"><circle cx="16" cy="16" r="13.5"></circle><path d="M10.5 16.8 L14.3 20.3 L21 12.6"></path></g></svg>
<span class="t" style="font-size: 26.75px; color: rgb(75, 80, 88); -webkit-text-stroke: 0.9px rgb(75, 80, 88); top: 753.05px; left: 2868.45px; letter-spacing: 0px; transform: scaleX(1.01); transform-origin: 0px 0px;">DRAFT</span>
<svg class="a" style="left:3256px;top:816px;" width="36" height="28" viewBox="0 0 36 28" fill="none"><path d="M5 21 L18 8.5 L31 21" stroke="#6b7280" stroke-width="3.4" stroke-linecap="round" stroke-linejoin="round"></path></svg>
<div class="a" style="left:1156px;top:1863px;width:2186px;height:2px;background:#d7dbe3"></div>
<div class="a" style="left:1156px;top:1865px;width:2186px;height:75px;background:#f6f7f9"></div>
<span class="t" style="font-size: 23.25px; color: rgb(14, 22, 51); -webkit-text-stroke: 0.9px rgb(14, 22, 51); top: 1891.55px; left: 1172.95px; letter-spacing: 0.029px; transform: scaleX(1.07); transform-origin: 0px 0px;">Results:</span>
<span class="t" style="font-size: 23.81px; color: rgb(14, 22, 51); -webkit-text-stroke: 0.5px rgb(14, 22, 51); top: 1890.75px; left: 1271.25px; letter-spacing: 0px; transform: scaleX(1.049); transform-origin: 0px 0px;">1 - 2 of 2</span>
<span class="t" style="font-size: 23.25px; color: rgb(14, 22, 51); -webkit-text-stroke: 0.9px rgb(14, 22, 51); top: 1891.55px; left: 2751.45px; letter-spacing: 0.205px; transform: scaleX(1.07); transform-origin: 0px 0px;">Rows per page:</span>
<div class="a" style="left:2960.5px;top:1873.5px;width:158.5px;height:59px;background:#fff;border:2px solid #c8cdd6;border-radius:9px"></div>
<span class="t" style="font-size: 19.94px; color: rgb(14, 22, 51); -webkit-text-stroke: 0.4px rgb(14, 22, 51); top: 1893.8px; left: 2982.9px; letter-spacing: -0.833px;">100</span>
<svg class="a" style="left:3082px;top:1892px;" width="16" height="22" viewBox="0 0 16 22" fill="none"><g stroke="#6b7280" stroke-width="2" stroke-linecap="round" stroke-linejoin="round" fill="none"><path d="M3 8.5 L8 3.7 L13 8.5 M3 14 L8 18.8 L13 14"></path></g></svg>
<div class="a" style="left:3150px;top:1877px;width:52px;height:52px;background:#f9fafb;border-radius:50%"></div>
<div class="a" style="left:3274px;top:1877px;width:52px;height:52px;background:#f9fafb;border-radius:50%"></div>
<div class="a" style="left:3212px;top:1877px;width:52px;height:52px;background:#3878f2;border-radius:50%"></div>
<svg class="a" style="left:3166px;top:1893px;" width="20" height="20" viewBox="0 0 20 20" fill="none"><path d="M12.8 4.2 L7 10 L12.8 15.8" stroke="#555b66" stroke-width="2.2" stroke-linecap="round" stroke-linejoin="round"></path></svg>
<svg class="a" style="left:3290px;top:1893px;" width="20" height="20" viewBox="0 0 20 20" fill="none"><path d="M7.2 4.2 L13 10 L7.2 15.8" stroke="#555b66" stroke-width="2.2" stroke-linecap="round" stroke-linejoin="round"></path></svg>
<span class="t" style="font-size: 26.58px; color: rgb(255, 255, 255); -webkit-text-stroke: 0.3px rgb(255, 255, 255); top: 1890.35px; left: 3231.65px;">1</span>
<div class="a" style="left:2000px;top:1974px;width:363px;height:70px;background:#ebedf1;border-radius:35px"></div><div class="a" style="left:2395px;top:1974px;width:513.5px;height:70px;background:#ebedf1;border-radius:35px"></div><div class="a" style="left:2941px;top:1974px;width:403px;height:70px;background:#ebedf1;border-radius:35px"></div>
<svg class="a" style="left:2033px;top:1993px;" width="30" height="32" viewBox="0 0 30 32" fill="none"><path d="M5.5 5.5 V26.5 L23.5 16 Z" stroke="#a9b0ba" stroke-width="2.8" stroke-linejoin="round" fill="none"></path></svg>
<span class="t" style="font-size: 26.33px; color: rgb(169, 176, 186); -webkit-text-stroke: 1.2px rgb(169, 176, 186); top: 1996.4px; left: 2083.6px; letter-spacing: 0.545px; transform: scaleX(1.07); transform-origin: 0px 0px;">Run EDA Analysis</span>
<svg class="a" style="left:2429px;top:1989px;" width="40" height="40" viewBox="0 0 40 40" fill="none"><g stroke="#a9b0ba" stroke-width="3.6" stroke-linecap="round" stroke-linejoin="round" fill="none"><path d="M8 3.8 H27.5 L36.2 12.5 V32 Q36.2 36.2 32 36.2 H8 Q3.8 36.2 3.8 32 V8 Q3.8 3.8 8 3.8Z"></path><path d="M12.5 4.5 V11.5 H24.5 V4.5"></path><circle cx="20" cy="25" r="4.3"></circle></g></svg>
<span class="t" style="font-size: 26.33px; color: rgb(169, 176, 186); -webkit-text-stroke: 1.2px rgb(169, 176, 186); top: 1996.4px; left: 2493.6px; letter-spacing: 0.566px; transform: scaleX(1.07); transform-origin: 0px 0px;">Save Features / Feature List</span>
<svg class="a" style="left:2973px;top:1989px;" width="44" height="40" viewBox="0 0 44 40" fill="none"><g stroke="#a9b0ba" stroke-width="3.5" stroke-linecap="round" stroke-linejoin="round" fill="none"><circle cx="8" cy="7" r="4.4"></circle><circle cx="22" cy="7" r="4.4"></circle><circle cx="36.5" cy="7" r="4.4"></circle><circle cx="8" cy="32.5" r="4.4"></circle><circle cx="22" cy="32.5" r="4.4"></circle><path d="M8 11.5 V28 M22 11.5 V28 M8 21 H29 Q36.5 21 36.5 14 V11.5"></path></g></svg>
<span class="t" style="font-size: 26.33px; color: rgb(169, 176, 186); -webkit-text-stroke: 1.2px rgb(169, 176, 186); top: 1996.4px; left: 3040.1px; letter-spacing: 0.871px; transform: scaleX(1.07); transform-origin: 0px 0px;">Generate Notebook</span>
<div class="a" style="left:1176px;top:963px;width:2146px;height:900px;background:#fff;border-radius:14px 14px 0 0"></div>
<span class="t" style="font-size: 27.44px; color: rgb(14, 22, 51); -webkit-text-stroke: 0.4px rgb(14, 22, 51); top: 990.8px; left: 1208.7px; letter-spacing: 0.439px; transform: scaleX(1.07); transform-origin: 0px 0px;">About</span>
<span class="t" style="font-size: 27.44px; color: rgb(14, 22, 51); -webkit-text-stroke: 0.4px rgb(14, 22, 51); top: 990.8px; left: 1353.2px; letter-spacing: 0.017px; transform: scaleX(1.07); transform-origin: 0px 0px;">Lineage</span>
<span class="t" style="font-size: 26.75px; color: rgb(14, 22, 51); -webkit-text-stroke: 0.9px rgb(14, 22, 51); top: 991.55px; left: 1523.45px; letter-spacing: 0px; transform: scaleX(1.069); transform-origin: 0px 0px;">SDK Code</span>
<span class="t" style="font-size: 27.44px; color: rgb(14, 22, 51); -webkit-text-stroke: 0.4px rgb(14, 22, 51); top: 990.8px; left: 1724.2px; letter-spacing: 0.027px; transform: scaleX(1.07); transform-origin: 0px 0px;">Preview</span>
<span class="t" style="font-size: 27.44px; color: rgb(14, 22, 51); -webkit-text-stroke: 0.4px rgb(14, 22, 51); top: 990.8px; left: 1895.2px; letter-spacing: -1.911px;">EDA</span>
<div class="a" style="left:1176px;top:1051px;width:2146px;height:4px;background:#dfe3ea"></div>
<div class="a" style="left:1491px;top:1047px;width:200px;height:8px;background:#3878f2"></div>
<div class="a" style="left:1196px;top:1075px;width:2106px;height:780px;background:#141517;overflow:hidden">
<span class="code" style="color: rgb(62, 66, 76); top: -16.9px; left: 47.6px;">35</span>
<span class="code" style="color: rgb(62, 66, 76); top: 27.3px; left: 47.6px;">36</span>
<span class="code" style="top: 27.3px; left: 98.6px;"><span style="color:#8b929c"># Join PREVIOUS_APPLICATION view to INSTALLMENTS_PAYMENTS view.</span></span>
<span class="code" style="color: rgb(62, 66, 76); top: 71.5px; left: 47.6px;">37</span>
<span class="code" style="top: 71.5px; left: 98.6px;"><span style="color:#d5d9de">installments_payments_view = installments_payments_view.join</span><span style="color:#bfc4cb">(</span></span>
<span class="code" style="color: rgb(62, 66, 76); top: 115.7px; left: 47.6px;">38</span>
<span class="code" style="top: 115.7px; left: 98.6px;"><span style="color:#d5d9de">    previous_application_view, rprefix=</span><span style="color:#63d5a3">"PriorApplication_"</span></span>
<span class="code" style="color: rgb(62, 66, 76); top: 159.9px; left: 47.6px;">39</span>
<span class="code" style="top: 159.9px; left: 98.6px;"><span style="color:#bfc4cb">)</span></span>
<span class="code" style="color: rgb(62, 66, 76); top: 204.1px; left: 47.6px;">40</span>
<span class="code" style="color: rgb(62, 66, 76); top: 248.3px; left: 47.6px;">41</span>
<span class="code" style="top: 248.3px; left: 98.6px;"><span style="color:#8b929c"># ==================================================================================================</span></span>
<span class="code" style="color: rgb(62, 66, 76); top: 292.5px; left: 47.6px;">42</span>
<span class="code" style="top: 292.5px; left: 98.6px;"><span style="color:#8b929c"># Do window aggregation from INSTALLMENTS_PAYMENTS</span></span>
<span class="code" style="color: rgb(62, 66, 76); top: 336.7px; left: 47.6px;">43</span>
<span class="code" style="top: 336.7px; left: 98.6px;"><span style="color:#8b929c"># ==================================================================================================</span></span>
<span class="code" style="color: rgb(62, 66, 76); top: 380.9px; left: 47.6px;">44</span>
<span class="code" style="color: rgb(62, 66, 76); top: 425.1px; left: 47.6px;">45</span>
<span class="code" style="top: 425.1px; left: 98.6px;"><span style="color:#8b929c"># Group INSTALLMENTS_PAYMENTS view by Client entity (PriorApplication_ClientID) across different</span></span>
<span class="code" style="color: rgb(62, 66, 76); top: 469.3px; left: 47.6px;">46</span>
<span class="code" style="top: 469.3px; left: 98.6px;"><span style="color:#8b929c"># PriorApplication_PRODUCT_COMBINATIONs.</span></span>
<span class="code" style="color: rgb(62, 66, 76); top: 513.5px; left: 47.6px;">47</span>
<span class="code" style="top: 513.5px; left: 98.6px;"><span style="color:#d5d9de">installments_payments_view_by_client_across_priorapplication_product_combinations = </span><span style="color:#bfc4cb">(</span></span>
<span class="code" style="color: rgb(62, 66, 76); top: 557.7px; left: 47.6px;">48</span>
<span class="code" style="top: 557.7px; left: 98.6px;"><span style="color:#d5d9de">    installments_payments_view.groupby</span><span style="color:#bfc4cb">(</span></span>
<span class="code" style="color: rgb(62, 66, 76); top: 601.9px; left: 47.6px;">49</span>
<span class="code" style="top: 601.9px; left: 98.6px;"><span style="color:#bfc4cb">        [</span><span style="color:#63d5a3">"PriorApplication_ClientID"</span><span style="color:#bfc4cb">]</span><span style="color:#d5d9de">, category=</span><span style="color:#63d5a3">"PriorApplication_PRODUCT_COMBINATION"</span></span>
<span class="code" style="color: rgb(62, 66, 76); top: 646.1px; left: 47.6px;">50</span>
<span class="code" style="top: 646.1px; left: 98.6px;"><span style="color:#bfc4cb">    )</span></span>
<span class="code" style="color: rgb(62, 66, 76); top: 690.3px; left: 47.6px;">51</span>
<span class="code" style="top: 690.3px; left: 98.6px;"><span style="color:#bfc4cb">)</span></span>
<span class="code" style="color: rgb(62, 66, 76); top: 734.5px; left: 47.6px;">52</span>
</div>
<div class="a" style="left:3282px;top:1340px;width:16px;height:116px;background:#181a2b"></div>
<div class="a" style="left:116px;top:302px;width:3328px;height:22px;background:linear-gradient(rgba(0,0,0,.075),rgba(0,0,0,.062) 25%,rgba(0,0,0,.025) 55%,rgba(0,0,0,.008) 85%,rgba(0,0,0,0))"></div>
<div class="a" style="left:116px;top:132px;width:3328px;height:170px;background:#fff"></div>
<div class="a" style="left:116px;top:132px;width:3328px;height:15px;background:linear-gradient(#fff 0,#fff 1px,#eaebef 2px,#eaebef 7px,#f4f5f7 10px,#fff 15px)"></div>
<span class="t" style="font-size: 34.06px; color: rgb(106, 18, 238); -webkit-text-stroke: 1.4px rgb(106, 18, 238); top: 174.3px; left: 148.7px; letter-spacing: 1.123px; transform: scaleX(1.07); transform-origin: 0px 0px;">Loan Default by client</span>
<span class="t" style="font-size: 23.25px; color: rgb(14, 22, 51); -webkit-text-stroke: 0.9px rgb(14, 22, 51); top: 235.55px; left: 148.45px; letter-spacing: 0.334px; transform: scaleX(1.07); transform-origin: 0px 0px;">Use Case Primary Entity:</span>
<span class="t" style="font-size: 23.25px; color: rgb(14, 22, 51); -webkit-text-stroke: 0.9px rgb(14, 22, 51); top: 235.55px; left: 725.45px; letter-spacing: 0.593px; transform: scaleX(1.07); transform-origin: 0px 0px;">Context:</span>
<span class="t" style="font-size: 23.25px; color: rgb(14, 22, 51); -webkit-text-stroke: 0.9px rgb(14, 22, 51); top: 235.55px; left: 1176.45px; letter-spacing: 0.628px; transform: scaleX(1.07); transform-origin: 0px 0px;">Target:</span>
<div class="a" style="left:446px;top:229px;width:231px;height:36px;border:2px solid #b84fd9;border-radius:18px;background:#fff"></div><span class="t" style="font-size: 20px; color: rgb(184, 79, 217); font-weight: 700; top: 237px; left: 464px; letter-spacing: 0px; transform: scaleX(1.046); transform-origin: 0px 0px;">NEW APPLICATION</span>
<div class="a" style="left:834px;top:229px;width:294px;height:36px;border:2px solid #5b52e0;border-radius:18px;background:#fff"></div><span class="t" style="font-size: 20px; color: rgb(91, 82, 224); font-weight: 700; top: 237px; left: 852px; letter-spacing: 0px; transform: scaleX(1.037); transform-origin: 0px 0px;">NEW LOAN APPLICATION</span>
<div class="a" style="left:1268px;top:229px;width:190px;height:36px;border:2px solid #d6622b;border-radius:18px;background:#fff"></div><span class="t" style="font-size: 20px; color: rgb(214, 98, 43); font-weight: 700; top: 237px; left: 1286.5px; letter-spacing: 0.05px;">LOAN DEFAULT</span>
<div class="a" style="left:116px;top:0px;width:3328px;height:132px;background:#282f4c;border-bottom:1.5px solid #161c3a"></div>
<div class="a" style="left:132px;top:0px;width:798px;height:132px;background:#1b2140;border-right:2px solid #3a4160;border-bottom:1.5px solid #141a36"></div>
<svg class="a" style="left:204px;top:40px;" width="48" height="46" viewBox="0 0 48 46" fill="none"><g stroke="#ececec" stroke-width="4" stroke-linejoin="round" stroke-linecap="round" fill="none"><rect x="6.5" y="7" width="35.5" height="23.5" rx="3"></rect><path d="M18 31 V38 M30 31 V38 M14 39.5 H34"></path></g></svg>
<span class="t" style="font-size: 28.61px; color: rgb(255, 255, 255); -webkit-text-stroke: 1px rgb(255, 255, 255); top: 49px; left: 272.5px; letter-spacing: 0px; transform: scaleX(1.056); transform-origin: 0px 0px;">Credit Default Dataset UI tutorial</span>
<svg class="a" style="left:740px;top:42px;" width="40" height="40" viewBox="0 0 40 40" fill="none"><g stroke="#ececec" stroke-width="3.2" fill="none" stroke-linecap="round"><circle cx="9.8" cy="19.7" r="4.5"></circle><circle cx="28" cy="10.8" r="4.5"></circle><circle cx="28" cy="29" r="4.5"></circle><path d="M14 17.7 L24 12.8 M14 21.7 L24 27"></path></g></svg>
<svg class="a" style="left:787px;top:42px;" width="40" height="40" viewBox="0 0 40 40" fill="none"><g stroke="#ececec" stroke-width="3.3" fill="none" stroke-linejoin="round"><path d="M20.00 4.20 L20.76 4.33 L21.49 4.71 L22.15 5.28 L22.75 5.97 L23.29 6.68 L23.79 7.32 L24.28 7.83 L24.82 8.16 L25.44 8.31 L26.15 8.30 L26.95 8.20 L27.83 8.08 L28.74 8.01 L29.62 8.08 L30.40 8.33 L31.03 8.77 L31.47 9.40 L31.72 10.18 L31.79 11.06 L31.72 11.97 L31.60 12.85 L31.50 13.65 L31.49 14.36 L31.64 14.98 L31.97 15.52 L32.48 16.01 L33.12 16.51 L33.83 17.05 L34.52 17.65 L35.09 18.31 L35.47 19.04 L35.60 19.80 L35.47 20.56 L35.09 21.29 L34.52 21.95 L33.83 22.55 L33.12 23.09 L32.48 23.59 L31.97 24.08 L31.64 24.62 L31.49 25.24 L31.50 25.95 L31.60 26.75 L31.72 27.63 L31.79 28.54 L31.72 29.42 L31.47 30.20 L31.03 30.83 L30.40 31.27 L29.62 31.52 L28.74 31.59 L27.83 31.52 L26.95 31.40 L26.15 31.30 L25.44 31.29 L24.82 31.44 L24.28 31.77 L23.79 32.28 L23.29 32.92 L22.75 33.63 L22.15 34.32 L21.49 34.89 L20.76 35.27 L20.00 35.40 L19.24 35.27 L18.51 34.89 L17.85 34.32 L17.25 33.63 L16.71 32.92 L16.21 32.28 L15.72 31.77 L15.18 31.44 L14.56 31.29 L13.85 31.30 L13.05 31.40 L12.17 31.52 L11.26 31.59 L10.38 31.52 L9.60 31.27 L8.97 30.83 L8.53 30.20 L8.28 29.42 L8.21 28.54 L8.28 27.63 L8.40 26.75 L8.50 25.95 L8.51 25.24 L8.36 24.62 L8.03 24.08 L7.52 23.59 L6.88 23.09 L6.17 22.55 L5.48 21.95 L4.91 21.29 L4.53 20.56 L4.40 19.80 L4.53 19.04 L4.91 18.31 L5.48 17.65 L6.17 17.05 L6.88 16.51 L7.52 16.01 L8.03 15.52 L8.36 14.98 L8.51 14.36 L8.50 13.65 L8.40 12.85 L8.28 11.97 L8.21 11.06 L8.28 10.18 L8.53 9.40 L8.97 8.77 L9.60 8.33 L10.38 8.08 L11.26 8.01 L12.17 8.08 L13.05 8.20 L13.85 8.30 L14.56 8.31 L15.18 8.16 L15.72 7.83 L16.21 7.32 L16.71 6.68 L17.25 5.97 L17.85 5.28 L18.51 4.71 L19.24 4.33 L20.00 4.20Z"></path><circle cx="20" cy="19.8" r="5"></circle></g></svg>
<svg class="a" style="left:848px;top:52px;" width="30" height="24" viewBox="0 0 30 24" fill="none"><path d="M7 8.5 L15 16 L23 8.5" stroke="#ececec" stroke-width="3" stroke-linecap="round" stroke-linejoin="round"></path></svg>
<svg class="a" style="left:2944px;top:40px;" width="44" height="48" viewBox="0 0 44 48" fill="none"><g stroke="#f0b43a" stroke-width="3.2" fill="none" stroke-linecap="round" stroke-linejoin="round"><path d="M11 33.5 V18 Q11 8 22 8 Q33 8 33 18 V33.5 M5 34 H39"></path><path d="M16.5 37 Q17 43 22 43 Q27 43 27.5 37"></path></g></svg>
<div class="a" style="left:2941.5px;top:21.5px;width:76.5px;height:41px;background:#a32017;border-radius:21px"></div>
<span class="t" style="font-size: 20.5px; color: rgb(255, 255, 255); font-weight: 700; top: 32.4px; left: 2951px; letter-spacing: 0.438px; transform: scaleX(1.2); transform-origin: 0px 0px;">999+</span>
<div class="a" style="left:3026px;top:24px;width:80px;height:80px;background:#c5c5c9;border-radius:50%"></div>
<span class="t" style="font-size: 30px; color: rgb(17, 17, 17); font-weight: 700; top: 49.3px; left: 3044px; letter-spacing: 0px; transform: scaleX(1.055); transform-origin: 0px 0px;">XC</span>
<span class="t" style="font-size: 28.61px; color: rgb(255, 255, 255); -webkit-text-stroke: 1px rgb(255, 255, 255); top: 49.2px; left: 3139.5px; letter-spacing: 0px; transform: scaleX(1.046); transform-origin: 0px 0px;">Xavier Conort</span>
<svg class="a" style="left:3357px;top:52px;" width="30" height="24" viewBox="0 0 30 24" fill="none"><path d="M6.5 8 L15 16.2 L23.5 8" stroke="#ececec" stroke-width="2.8" stroke-linecap="round" stroke-linejoin="round"></path></svg>
<div class="a" style="left:116px;top:0px;width:16px;height:2154px;background:linear-gradient(90deg,rgba(0,0,0,.15),rgba(0,0,0,.09) 20%,rgba(0,0,0,.03) 50%,rgba(0,0,0,0))"></div>
<div class="a" style="left:0px;top:0px;width:116px;height:2154px;background:#fff"></div>
<div class="a" style="left:0px;top:618px;width:116px;height:152px;background:#eaf4fe"></div>
<div class="a" style="left:108px;top:618px;width:8px;height:152px;background:#2b62d9"></div>
<div class="a" style="left:0px;top:1850px;width:116px;height:2px;background:#c5cad6"></div>
<svg class="a" style="left:0px;top:0px;" width="116" height="110" viewBox="0 0 116 110" fill="none"><path d="M26 44 L44.3 44 L35.2 28Z" fill="#e8969a" stroke="#e8969a" stroke-width="0.5"></path><path d="M35.2 28 L53.5 28 L44.3 44Z" fill="#df6dc2" stroke="#df6dc2" stroke-width="0.5"></path><path d="M44.3 44 L62.6 44 L53.5 28Z" fill="#b03fe6" stroke="#b03fe6" stroke-width="0.5"></path><path d="M53.5 28 L71.8 28 L62.6 44Z" fill="#6e2fe6" stroke="#6e2fe6" stroke-width="0.5"></path><path d="M62.6 44 L80.9 44 L71.8 28Z" fill="#5468df" stroke="#5468df" stroke-width="0.5"></path><path d="M71.8 28 L89.6 28 L80.9 44Z" fill="#67a3e6" stroke="#67a3e6" stroke-width="0.5"></path><path d="M31 65.8 L49.3 65.8 L40.3 50Z" fill="#b03fe6" stroke="#b03fe6" stroke-width="0.5"></path><path d="M40.3 50 L58.6 50 L49.3 65.8Z" fill="#6e2fe6" stroke="#6e2fe6" stroke-width="0.5"></path><path d="M49.3 65.8 L67.4 65.8 L58.6 50Z" fill="#5468df" stroke="#5468df" stroke-width="0.5"></path><path d="M58.6 50 L76.6 50 L67.4 65.8Z" fill="#67a3e6" stroke="#67a3e6" stroke-width="0.5"></path><path d="M31 65.8 L49.3 65.8 L40.2 81.6Z" fill="#df6dc2" stroke="#df6dc2" stroke-width="0.5"></path><path d="M40.2 81.6 L58 81.6 L49.3 65.8Z" fill="#e8969a" stroke="#e8969a" stroke-width="0.5"></path></svg>
<svg class="a" style="left:30px;top:360px;" width="50" height="50" viewBox="0 0 50 50" fill="none"><g stroke="#40454e" stroke-width="3.6" fill="none" stroke-linecap="round" stroke-linejoin="round"><path d="M12.5 22 L31.5 11.6 Q33.6 10.6 34.8 12.8 L39 21 Q40 23.2 37.6 24.2 L16 31 Q12 32.2 10.3 28.6 Q8.8 24.6 12.5 22Z"></path><path d="M28.4 13.6 L33 23.8"></path><path d="M23.6 29.5 V41 M23.6 31.5 L13.2 41.2 M23.6 31.5 L34.4 41.2"></path></g></svg>
<svg class="a" style="left:30px;top:512px;" width="50" height="50" viewBox="0 0 50 50" fill="none"><g stroke="#40454e" stroke-width="2.2" fill="none" stroke-linejoin="round" stroke-linecap="round"><path d="M22 6.5 Q36 6 38.5 19 Q38.5 23 41 27.5 Q41.5 29 39.5 29.5 L38.5 30 V35.5 Q38.5 37.5 36 37.5 H32 V44.5 H16 V37 Q10.5 31 10.5 26"></path><path d="M17.00 6.00 L17.53 6.14 L18.03 6.55 L18.46 7.16 L18.81 7.88 L19.10 8.61 L19.35 9.25 L19.60 9.72 L19.91 9.98 L20.30 10.01 L20.82 9.86 L21.45 9.58 L22.17 9.27 L22.93 9.01 L23.66 8.88 L24.30 8.95 L24.78 9.22 L25.05 9.70 L25.12 10.34 L24.99 11.07 L24.73 11.83 L24.42 12.55 L24.14 13.18 L23.99 13.70 L24.02 14.09 L24.28 14.40 L24.75 14.65 L25.39 14.90 L26.12 15.19 L26.84 15.54 L27.45 15.97 L27.86 16.47 L28.00 17.00 L27.86 17.53 L27.45 18.03 L26.84 18.46 L26.12 18.81 L25.39 19.10 L24.75 19.35 L24.28 19.60 L24.02 19.91 L23.99 20.30 L24.14 20.82 L24.42 21.45 L24.73 22.17 L24.99 22.93 L25.12 23.66 L25.05 24.30 L24.78 24.78 L24.30 25.05 L23.66 25.12 L22.93 24.99 L22.17 24.73 L21.45 24.42 L20.82 24.14 L20.30 23.99 L19.91 24.02 L19.60 24.28 L19.35 24.75 L19.10 25.39 L18.81 26.12 L18.46 26.84 L18.03 27.45 L17.53 27.86 L17.00 28.00 L16.47 27.86 L15.97 27.45 L15.54 26.84 L15.19 26.12 L14.90 25.39 L14.65 24.75 L14.40 24.28 L14.09 24.02 L13.70 23.99 L13.18 24.14 L12.55 24.42 L11.83 24.73 L11.07 24.99 L10.34 25.12 L9.70 25.05 L9.22 24.78 L8.95 24.30 L8.88 23.66 L9.01 22.93 L9.27 22.17 L9.58 21.45 L9.86 20.82 L10.01 20.30 L9.98 19.91 L9.72 19.60 L9.25 19.35 L8.61 19.10 L7.88 18.81 L7.16 18.46 L6.55 18.03 L6.14 17.53 L6.00 17.00 L6.14 16.47 L6.55 15.97 L7.16 15.54 L7.88 15.19 L8.61 14.90 L9.25 14.65 L9.72 14.40 L9.98 14.09 L10.01 13.70 L9.86 13.18 L9.58 12.55 L9.27 11.83 L9.01 11.07 L8.88 10.34 L8.95 9.70 L9.22 9.22 L9.70 8.95 L10.34 8.88 L11.07 9.01 L11.83 9.27 L12.55 9.58 L13.18 9.86 L13.70 10.01 L14.09 9.98 L14.40 9.72 L14.65 9.25 L14.90 8.61 L15.19 7.88 L15.54 7.16 L15.97 6.55 L16.47 6.14 L17.00 6.00Z"></path><circle cx="17" cy="17" r="4"></circle></g></svg>
<svg class="a" style="left:25px;top:665px;" width="50" height="50" viewBox="0 0 50 50" fill="none"><g stroke="#40454e" stroke-width="3.8" fill="none" stroke-linecap="round" stroke-linejoin="round"><path d="M25 8.6 V10 M13.5 13.5 L14.8 14.8 M36.5 13.5 L35.2 14.8 M9 25 H10.8 M39.2 25 H41"></path><path d="M20.5 33 Q16.5 29.5 16.5 25 Q16.5 16.8 25 16.8 Q33.5 16.8 33.5 25 Q33.5 29.5 29.5 33 M20.5 33 H29.5 M20.5 33 L21.5 37 Q22.3 39.6 25 39.6 Q27.7 39.6 28.5 37 L29.5 33"></path></g></svg>
<svg class="a" style="left:30px;top:818px;" width="50" height="50" viewBox="0 0 50 50" fill="none"><g stroke="#40454e" stroke-width="4" fill="none" stroke-linecap="round" stroke-linejoin="round"><path d="M18 10 H30 M20 10 V20 L13.5 38 Q13.2 39.5 15 39.5 H33 Q34.8 39.5 34.5 38 L28 20 V10 M20 20 H28"></path></g></svg>
<svg class="a" style="left:30px;top:970px;" width="50" height="50" viewBox="0 0 50 50" fill="none"><path d="M13 24.5 L21 32 L37.5 15.5" stroke="#40454e" stroke-width="3.8" fill="none" stroke-linecap="round" stroke-linejoin="round"></path></svg>
<svg class="a" style="left:30px;top:1122px;" width="50" height="50" viewBox="0 0 50 50" fill="none"><path d="M9.5 25 H15.5 L20.5 37 L27.5 11.5 L32.5 26 H39" stroke="#40454e" stroke-width="3.8" fill="none" stroke-linecap="round" stroke-linejoin="round"></path></svg>
<svg class="a" style="left:30px;top:1900px;" width="50" height="50" viewBox="0 0 50 50" fill="none"><g stroke="#40454e" stroke-width="3.8" fill="none" stroke-linecap="round" stroke-linejoin="round"><path d="M23 38 Q9 33 9.5 19 Q9.5 15 10 13.5 Q18 14 24 9.5 Q30 14 38.5 13.5 Q39.5 19 38.5 24"></path><path d="M29.5 34.5 L33 38 L40 31.5"></path></g></svg>
<svg class="a" style="left:30px;top:2052px;" width="50" height="50" viewBox="0 0 50 50" fill="none"><g stroke="#40454e" stroke-width="3.8" fill="none" stroke-linecap="round" stroke-linejoin="round"><circle cx="24" cy="15.5" r="7"></circle><path d="M14 39.5 Q14 30 22 30"></path><circle cx="33.5" cy="33" r="4.6"></circle><path d="M37 36.5 L40.5 40"></path></g></svg>
<div class="a" style="left:92px;top:32px;width:56px;height:56px;background:#fff;border:2px solid #c9cfd6;border-radius:50%;box-shadow:0 1px 4px rgba(0,0,0,.25)"></div>
<svg class="a" style="left:106px;top:42px;" width="30" height="36" viewBox="0 0 30 36" fill="none"><path d="M10 6.5 L21 18 L10 29.5" stroke="#7d7d7d" stroke-width="4.4" stroke-linecap="round" stroke-linejoin="round"></path></svg>
<div class="a" style="left:3328px;top:2016px;width:100px;height:100px;background:#3878f2;border-radius:50%;box-shadow:0 4px 10px rgba(0,0,0,.3)"></div>
<span class="t" style="font-size: 55.92px; color: rgb(255, 255, 255); font-weight: 700; -webkit-text-stroke: 1.5px rgb(255, 255, 255); top: 2040.75px; left: 3362.75px;">?</span>
</div></body></html>
